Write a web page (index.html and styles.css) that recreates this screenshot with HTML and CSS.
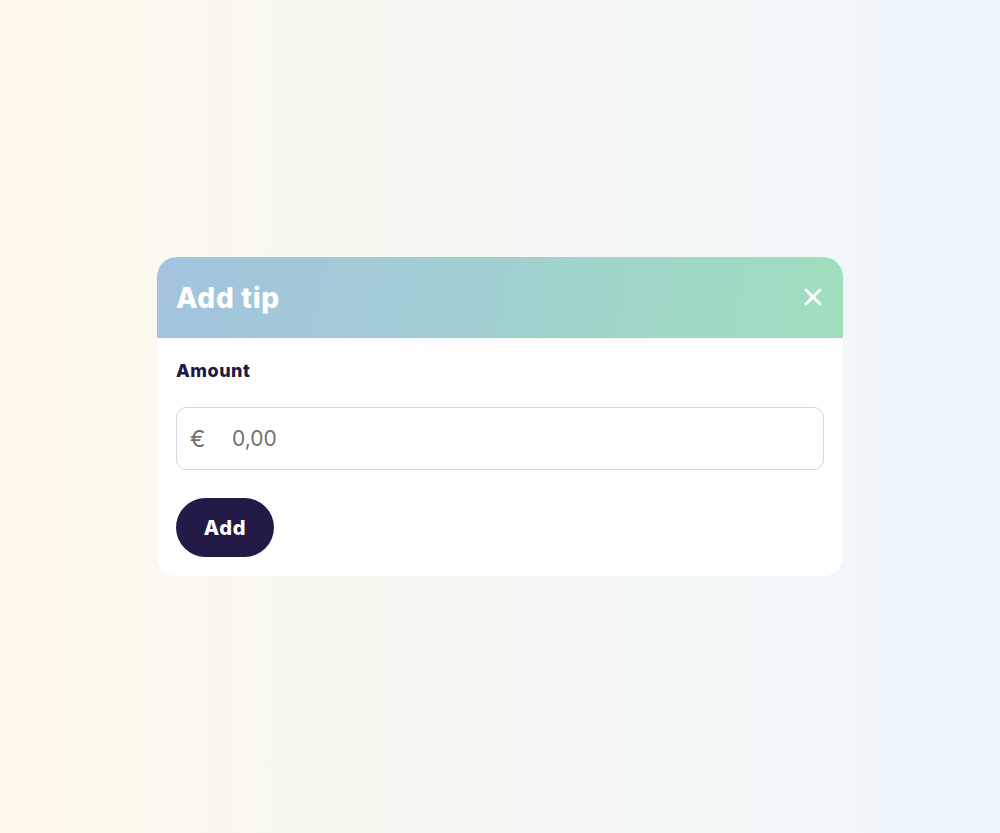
FILE: index.html
```html
<!DOCTYPE html>
<html>
<head>
<meta charset="utf-8">
<link rel="stylesheet" href="styles.css">
</head>
<body>
<div class="page">
  <div class="modal">
    <div class="modal-header">
      <h1 class="modal-title">Add tip</h1>
      <button class="close-btn" aria-label="Close">
        <svg width="18" height="18" viewBox="0 0 18 18"><path d="M2 2 L16 16 M16 2 L2 16" stroke="#fff" stroke-width="3" stroke-linecap="round"/></svg>
      </button>
    </div>
    <div class="modal-body">
      <label class="field-label">Amount</label>
      <div class="amount-input">
        <span class="currency">€</span>
        <span class="placeholder">0,00</span>
      </div>
      <button class="add-btn">Add</button>
    </div>
  </div>
</div>
</body>
</html>
```
FILE: styles.css
```css
* { box-sizing: border-box; }
html, body { margin: 0; padding: 0; }
body {
  width: 1000px;
  height: 833px;
  background: linear-gradient(90deg, #fef8ea 0%, #f6f8f4 50%, #eef6fd 100%);
  font-family: "Inter", "Lato", sans-serif;
}
.page {
  padding-top: 257px;
  padding-left: 157px;
}
.modal {
  width: 686px;
  height: 319px;
  background: #fff;
  border-radius: 20px;
  overflow: hidden;
}
.modal-header {
  height: 81px;
  display: flex;
  align-items: center;
  justify-content: space-between;
  padding: 0 21px 0 19px;
  background: linear-gradient(100deg, #a3c3de 0%, #a0cfd0 50%, #9fdfbc 100%);
  box-shadow: 0 1px 3px rgba(0,0,0,0.06);
  position: relative;
}
.modal-title {
  margin: 0;
  color: #fff;
  font-family: "Inter", sans-serif;
  font-weight: 800;
  font-size: 28px;
  letter-spacing: 0.7px;
  line-height: 32px;
}
.close-btn {
  background: none;
  border: 0;
  padding: 0;
  width: 18px;
  height: 18px;
  display: flex;
  margin-top: -2px;
}
.modal-body {
  padding: 22px 19px 0 19px;
  display: flex;
  flex-direction: column;
  align-items: flex-start;
}
.field-label {
  font-family: "Inter", sans-serif;
  font-weight: 800;
  font-size: 18px;
  letter-spacing: 0.5px;
  color: #1f1a45;
  line-height: 22px;
}
.amount-input {
  margin-top: 25px;
  width: 648px;
  height: 63px;
  border: 1.5px solid #d5d7dd;
  border-radius: 10px;
  display: flex;
  align-items: center;
  padding-left: 13px;
  font-family: "Inter", sans-serif;
  font-size: 21px;
  color: #727272;
}
.currency { width: 42px; font-size: 23px; }
.add-btn {
  margin-top: 28px;
  width: 98px;
  height: 59px;
  border: 0;
  border-radius: 30px;
  background: #231a47;
  color: #fff;
  font-family: "Inter", sans-serif;
  font-weight: 800;
  font-size: 20px;
  letter-spacing: 0.8px;
}
```
